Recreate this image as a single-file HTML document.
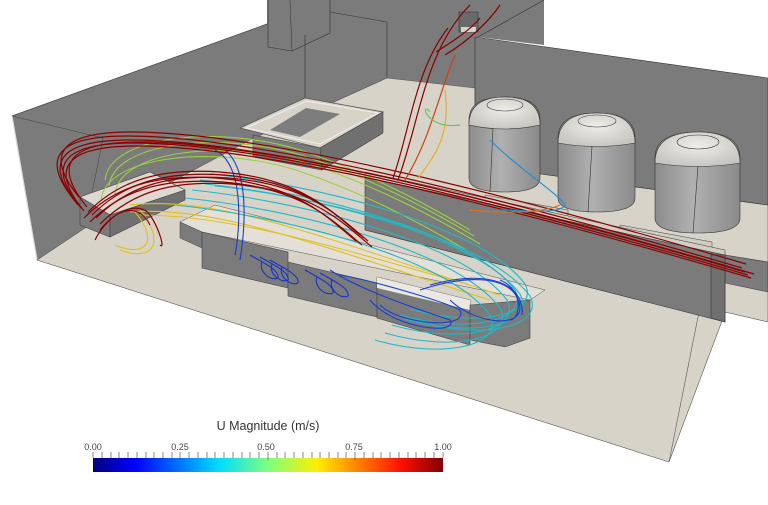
<!DOCTYPE html>
<html><head><meta charset="utf-8"><style>
html,body{margin:0;padding:0;background:#fff;width:768px;height:505px;overflow:hidden}
svg{display:block}
text{font-family:"Liberation Sans",sans-serif}
</style></head><body>
<svg width="768" height="505" viewBox="0 0 768 505" xmlns="http://www.w3.org/2000/svg">
<defs>
<linearGradient id="jet" x1="0" x2="1" y1="0" y2="0">
<stop offset="0" stop-color="#00007f"/><stop offset="0.12" stop-color="#0000ff"/>
<stop offset="0.36" stop-color="#00ddff"/><stop offset="0.5" stop-color="#7fff7f"/>
<stop offset="0.64" stop-color="#ffee00"/><stop offset="0.88" stop-color="#ff1000"/>
<stop offset="1" stop-color="#800000"/></linearGradient>
<linearGradient id="tank" x1="0" x2="1"><stop offset="0" stop-color="#8c8c8c"/><stop offset="0.45" stop-color="#b0b0b0"/><stop offset="1" stop-color="#8a8a8a"/></linearGradient>
<radialGradient id="dome" cx="0.5" cy="0.4" r="0.6"><stop offset="0" stop-color="#efede8"/><stop offset="1" stop-color="#c8c6c0"/></radialGradient>
<g id="red1" fill="none" stroke="#8b0000" stroke-width="1.2">
<path d="M78,205 C45,165 55,140 130,140 C260,140 500,200 745,272"/>
</g>
<g id="red2" fill="none" stroke="#8b0000" stroke-width="1.2">
<path d="M88,212 C120,180 160,168 220,172 C300,178 330,210 360,235"/>
</g>
<g id="grn" fill="none" stroke="#9ad040" stroke-width="1.1">
<path d="M105,180 C110,135 220,125 300,150 C360,170 420,200 470,230"/>
</g>
<g id="cy" fill="none" stroke="#20b8c8" stroke-width="1.1">
<path d="M200,180 C300,190 470,230 515,290 C530,320 470,335 400,315"/>
</g>
<g id="bl" fill="none" stroke="#1535c8" stroke-width="1.1">
<path d="M250,255 C262,262 280,270 278,278 C270,282 258,270 262,262"/>
</g>
</defs>
<!-- big left/back wall -->
<polygon points="12,116 267,24 267,0 544,0 544,45 478,37 475,88 387,78 250,140 85,228 37,260" fill="#7b7b7b"/>
<line x1="12" y1="116" x2="267" y2="24" stroke="#444" stroke-width="0.7"/>
<line x1="12" y1="116" x2="37" y2="260" stroke="#ddd" stroke-width="1.2"/>
<line x1="12" y1="116" x2="103" y2="138" stroke="#444" stroke-width="0.5"/>
<line x1="103" y1="138" x2="85" y2="228" stroke="#444" stroke-width="0.5"/>
<!-- tower details -->
<polyline points="268,0 268,47 292,51 330,33 330,0" fill="none" stroke="#333" stroke-width="0.6"/>
<line x1="290" y1="0" x2="292" y2="51" stroke="#333" stroke-width="0.5"/>
<line x1="305" y1="35" x2="305" y2="98" stroke="#333" stroke-width="0.6"/>
<line x1="330" y1="12" x2="387" y2="22" stroke="#333" stroke-width="0.6"/>
<line x1="387" y1="22" x2="387" y2="80" stroke="#333" stroke-width="0.6"/>
<line x1="544" y1="0" x2="478" y2="37" stroke="#333" stroke-width="0.6"/>
<polygon points="459,12 478,12 478,32 459,32" fill="#6a6a6a" stroke="#333" stroke-width="0.6"/>
<polygon points="461,27 476,27 476,32 461,32" fill="#d8d3c9"/>
<!-- floor -->
<polygon points="37,260 85,228 250,140 387,78 475,88 475,165 768,205 768,265 725,313 669,462" fill="#d8d3c9" stroke="#555" stroke-width="0.6"/>
<!-- back right wall -->
<polygon points="475,37 768,78 768,205 475,165" fill="#7b7b7b" stroke="#333" stroke-width="0.6"/>
<line x1="706" y1="277" x2="669" y2="462" stroke="#555" stroke-width="0.6"/>
<!-- back open box -->
<polygon points="240,128 305,98 383,112 320,148" fill="#d8d3c9" stroke="#555" stroke-width="0.8"/>
<polygon points="246,128 307,101 378,113 320,144" fill="none" stroke="#eee" stroke-width="1"/>
<polygon points="270,130 306,108 340,114 300,137" fill="#7d7d7d"/>
<polygon points="253,135 320,148 322,170 253,157" fill="#7b7b7b" stroke="#444" stroke-width="0.6"/>
<polygon points="320,148 383,112 383,133 322,170" fill="#707070" stroke="#444" stroke-width="0.6"/>
<!-- tanks -->
<g stroke="#333" stroke-width="0.6">
<path d="M469,120 Q469,97 505,97 Q540,97 540,120 L540,178 Q540,192 505,192 Q469,192 469,178 Z" fill="url(#tank)"/>
<path d="M469,125 Q469,97 505,97 Q540,97 540,125 Q505,133 469,125Z" fill="url(#dome)"/>
<ellipse cx="505" cy="105" rx="18" ry="6" fill="none"/>
<line x1="493" y1="128" x2="490" y2="192"/>
<path d="M558,138 Q558,113 597,113 Q635,113 635,138 L635,198 Q635,212 597,212 Q558,212 558,198 Z" fill="url(#tank)"/>
<path d="M558,143 Q558,113 597,113 Q635,113 635,143 Q597,150 558,143Z" fill="url(#dome)"/>
<ellipse cx="597" cy="121" rx="19" ry="6" fill="none"/>
<line x1="592" y1="146" x2="588" y2="212"/>
<path d="M655,158 Q655,132 698,132 Q740,132 740,158 L740,218 Q740,233 698,233 Q655,233 655,218 Z" fill="url(#tank)"/>
<path d="M655,163 Q655,132 698,132 Q740,132 740,163 Q698,170 655,163Z" fill="url(#dome)"/>
<ellipse cx="698" cy="142" rx="21" ry="7" fill="none"/>
<line x1="698" y1="166" x2="693" y2="233"/>
</g>
<polygon points="485,195 568,210 568,220 485,205" fill="#d0cbc1" stroke="#444" stroke-width="0.5"/>
<polygon points="620,225 712,242 712,252 620,235" fill="#d0cbc1" stroke="#444" stroke-width="0.5"/>
<!-- partition -->
<polygon points="365,177 725,255 725,322 365,230" fill="#7b7b7b" stroke="#333" stroke-width="0.6"/>
<polygon points="365,172 725,250 725,255 365,177" fill="#d2cec5" stroke="#333" stroke-width="0.5"/>
<!-- duct -->
<polygon points="725,255 768,262 768,292 725,283" fill="#7b7b7b" stroke="#333" stroke-width="0.6"/>
<polygon points="725,283 768,292 768,322 725,312" fill="#d8d3c9" stroke="#555" stroke-width="0.6"/>
<polygon points="711,255 725,255 725,322 711,318" fill="#707070" stroke="#333" stroke-width="0.6"/>
<!-- inlet -->
<polygon points="80,197 150,172 185,190 110,215" fill="#ddd9d0" stroke="#444" stroke-width="0.6"/>
<polygon points="80,197 110,215 110,237 80,225" fill="#7b7b7b" stroke="#444" stroke-width="0.6"/>
<polygon points="110,215 185,190 185,200 110,237" fill="#707070" stroke="#444" stroke-width="0.6"/>
<!-- bench -->
<polygon points="180,222 215,205 545,290 530,300 202,232" fill="#e4e0d8" stroke="#555" stroke-width="0.5"/>
<polygon points="180,222 202,232 202,248 180,238" fill="#7b7b7b" stroke="#444" stroke-width="0.5"/>
<polygon points="202,232 288,252 288,288 202,268" fill="#7b7b7b" stroke="#444" stroke-width="0.6"/>
<polygon points="288,262 377,283 377,317 288,296" fill="#7b7b7b" stroke="#444" stroke-width="0.6"/>
<polygon points="377,277 470,300 470,345 377,318" fill="#7b7b7b" stroke="#444" stroke-width="0.6"/>
<polygon points="377,277 470,300 470,310 377,288" fill="#ebe8e2"/>
<polygon points="470,305 530,300 530,338 505,347 470,340" fill="#7b7b7b" stroke="#444" stroke-width="0.6"/>
<!-- streamlines -->
<use href="#grn"/><use href="#grn" transform="translate(4,6)"/><use href="#grn" transform="translate(10,14)"/><use href="#grn" transform="translate(-4,20)"/>
<g fill="none" stroke="#e0c020" stroke-width="1.1">
<path d="M120,250 C150,262 168,245 140,210"/><path d="M115,245 C145,258 160,242 135,212"/>
<path d="M130,205 C220,195 330,240 500,295"/><path d="M130,212 C220,205 330,250 490,300"/>
<path d="M140,215 C240,215 360,255 470,285"/>
</g>
<use href="#cy"/><use href="#cy" transform="translate(5,4)"/><use href="#cy" transform="translate(-8,10)"/><use href="#cy" transform="translate(10,-6)"/><use href="#cy" transform="translate(-15,18)"/><use href="#cy" transform="translate(15,6)"/><use href="#cy" transform="translate(-25,25)"/>
<g fill="none" stroke="#1540d0" stroke-width="1.1">
<path d="M215,150 C245,165 240,230 235,255"/><path d="M225,150 C250,170 245,230 240,260"/>
<path d="M340,275 C370,280 440,300 460,310 C470,330 400,325 380,305"/>
<path d="M330,270 C360,290 420,310 450,320 C460,335 395,330 370,300"/>
<path d="M420,290 C480,270 520,280 520,310 C515,330 470,320 450,300"/>
<path d="M430,285 C490,268 525,285 522,315"/>
<path d="M500,280 C525,290 520,320 510,320"/>
</g>
<use href="#bl"/><use href="#bl" transform="translate(10,2)"/><use href="#bl" transform="translate(20,5)"/><use href="#bl" transform="translate(55,15)"/><use href="#bl" transform="translate(70,18)"/>
<use href="#red1"/><use href="#red1" transform="translate(3,3)"/><use href="#red1" transform="translate(6,6)"/><use href="#red1" transform="translate(-3,-4)"/><use href="#red1" transform="translate(1,-8)"/><use href="#red1" transform="translate(9,2)"/>
<use href="#red2"/><use href="#red2" transform="translate(4,3)"/><use href="#red2" transform="translate(8,6)"/><use href="#red2" transform="translate(2,10)"/><use href="#red2" transform="translate(12,12)"/><use href="#red2" transform="translate(-4,6)"/>
<g fill="none" stroke="#8b0000" stroke-width="1.2">
<path d="M95,240 C110,210 140,200 150,215 C160,230 165,250 160,245"/>
<path d="M100,230 C120,205 140,205 150,225"/>
<path d="M393,178 C410,130 415,70 448,28"/><path d="M398,180 C420,120 425,50 470,5"/>
<path d="M445,55 C470,40 490,20 500,5"/><path d="M436,52 C455,40 470,30 480,18"/>
</g>
<g fill="none" stroke-width="1.2">
<path d="M405,180 C430,140 440,90 455,55" stroke="#d04010"/>
<path d="M418,178 C440,150 450,130 445,90" stroke="#e8b020"/>
<path d="M430,112 C420,100 425,130 460,125" stroke="#70c060"/>
<path d="M490,140 C520,170 560,195 565,205 C560,215 520,210 500,210" stroke="#2090d0"/>
<path d="M470,210 C520,215 550,210 560,205" stroke="#e07020"/>
</g>
<!-- colorbar -->
<text x="268" y="430" font-size="12.5" text-anchor="middle" fill="#333">U Magnitude (m/s)</text>
<g font-size="9" fill="#444" text-anchor="middle">
<text x="93" y="450">0.00</text><text x="180" y="450">0.25</text><text x="266" y="450">0.50</text><text x="354" y="450">0.75</text><text x="443" y="450">1.00</text>
</g>
<rect x="93" y="458" width="350" height="14" fill="url(#jet)"/>
<path d="M93,452v6 M102,452v6 M111,452v6 M119,452v6 M128,452v6 M137,452v6 M146,452v6 M154,452v6 M163,452v6 M172,452v6 M180,452v8 M189,452v6 M198,452v6 M207,452v6 M215,452v6 M224,452v6 M233,452v6 M242,452v6 M250,452v6 M259,452v6 M268,452v8 M277,452v6 M285,452v6 M294,452v6 M303,452v6 M312,452v6 M320,452v6 M329,452v6 M338,452v6 M346,452v6 M355,452v8 M364,452v6 M373,452v6 M381,452v6 M390,452v6 M399,452v6 M408,452v6 M416,452v6 M425,452v6 M434,452v6 M443,452v6" stroke="#555" stroke-width="0.7"/>
</svg>
</body></html>
